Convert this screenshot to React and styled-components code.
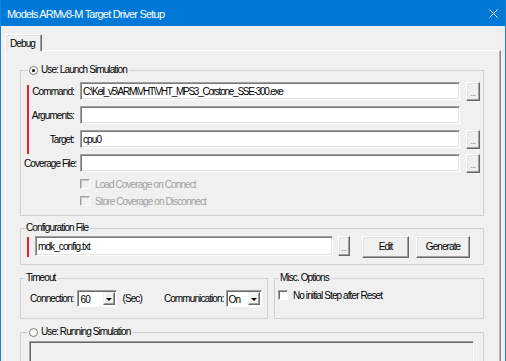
import React from 'react'
import styled, { createGlobalStyle } from 'styled-components'

const GlobalStyle = createGlobalStyle`
  html, body {
    margin: 0;
    padding: 0;
    background: #f0f0f0;
  }
  body {
    font-family: "Liberation Sans", Arial, sans-serif;
    font-size: 10px;
    letter-spacing: -0.9px;
    color: #000;
  }
  #root {
    width: 506px;
    height: 361px;
  }
`

const Window = styled.div`
  width: 506px;
  height: 361px;
  box-sizing: border-box;
  border-left: 1px solid #1883d7;
  border-right: 1px solid #1883d7;
  background: #f0f0f0;
  display: flex;
  flex-direction: column;
  overflow: hidden;
`

const TitleBar = styled.div`
  height: 26px;
  flex: none;
  background: #0078d7;
  color: #fff;
  display: flex;
  align-items: center;
  justify-content: space-between;
  padding: 1px 7px 0 6px;
  box-sizing: border-box;
  font-size: 11px;
  letter-spacing: -0.8px;
`

const Body = styled.div`
  flex: 1;
  display: flex;
  flex-direction: column;
  padding: 8px 4px 0 4px;
  min-height: 0;
`

const TabStrip = styled.div`
  display: flex;
  height: 16px;
  flex: none;
`

const Tab = styled.div`
  position: relative;
  z-index: 1;
  width: 37px;
  height: 17px;
  box-sizing: border-box;
  margin-bottom: -1px;
  padding: 3px 0 0 4px;
  background: #f0f0f0;
  border-top: 1px solid #fff;
  border-left: 1px solid #fff;
  border-right: 1px solid #696969;
  box-shadow: inset -1px 0 0 #a0a0a0, inset 1px 1px 0 #e3e3e3;
`

const Panel = styled.div`
  flex: 1;
  min-height: 0;
  overflow: hidden;
  border-top: 1px solid #fff;
  border-left: 1px solid #fff;
  border-right: 1px solid #8a8a8a;
  box-shadow: inset -1px 0 0 #b4b4b4;
  padding: 13px 16px 0 14px;
  display: flex;
  flex-direction: column;
`

const Group = styled.fieldset`
  margin: ${p => p.$mt || 0}px 0 0 0;
  min-width: 0;
  border: 1px solid #d0d0d0;
  padding: ${p => p.$pad};
  flex: ${p => (p.$grow ? 1 : 'none')};
  width: ${p => (p.$w ? `${p.$w}px` : 'auto')};
  box-sizing: border-box;
`

const Legend = styled.legend`
  padding: 0 2px 0 1px;
  margin-left: ${p => p.$ml || 0}px;
  line-height: 12px;
  height: 12px;
  display: flex;
  align-items: center;
  gap: 3px;
  color: #000;
`

const Radio = styled.span`
  width: 9px;
  height: 9px;
  box-sizing: border-box;
  border-radius: 50%;
  border: 1px solid #7a7a7a;
  background: #fff;
  display: flex;
  align-items: center;
  justify-content: center;
  &::after {
    content: '';
    width: 3px;
    height: 3px;
    border-radius: 50%;
    background: ${p => (p.$checked ? '#000' : 'transparent')};
  }
`

const FieldGrid = styled.div`
  display: grid;
  grid-template-columns: 3px 2px 51px 380px 20px;
  grid-template-rows: repeat(4, 18px);
  row-gap: 6px;
`

const RedBar = styled.div`
  width: 2px;
  background: #e0262c;
  grid-column: 2;
  grid-row: 1 / 4;
  margin: 3px 0 -6px 0;
`

const FieldLabel = styled.label`
  grid-column: ${p => (p.$wide ? '1 / 4' : '3')};
  grid-row: ${p => p.$row};
  align-self: center;
  text-align: right;
  padding-right: 6px;
  white-space: nowrap;
`

const TextBox = styled.div`
  box-sizing: border-box;
  height: ${p => p.$h || 18}px;
  width: ${p => (p.$w ? `${p.$w}px` : 'auto')};
  grid-column: 4;
  grid-row: ${p => p.$row || 'auto'};
  flex: none;
  background: #fff;
  border-style: solid;
  border-width: 1px;
  border-color: #a0a0a0 #fff #fff #a0a0a0;
  box-shadow: inset 1px 1px 0 #7a7a7a, inset -1px -1px 0 #e3e3e3;
  padding: 1px 2px 0 2px;
  display: flex;
  align-items: center;
  white-space: nowrap;
  overflow: hidden;
  letter-spacing: ${p => (p.$tight ? '-1.25px' : 'inherit')};
`

const Button = styled.div`
  box-sizing: border-box;
  width: ${p => p.$w}px;
  height: ${p => p.$h}px;
  margin-left: ${p => p.$ml || 0}px;
  grid-column: 5;
  grid-row: ${p => p.$row || 'auto'};
  justify-self: end;
  flex: none;
  background: #f0f0f0;
  border-style: solid;
  border-width: 1px;
  border-color: #fff #696969 #696969 #fff;
  box-shadow: inset -1px -1px 0 #a0a0a0, inset 1px 1px 0 #e3e3e3;
  display: flex;
  align-items: center;
  justify-content: center;
  color: ${p => (p.$dots ? '#555' : '#000')};
  font-size: ${p => (p.$dots ? '8px' : '10px')};
  letter-spacing: ${p => (p.$dots ? '-0.5px' : 'inherit')};
  line-height: 1;
  padding-top: ${p => (p.$dots ? '5px' : '0')};
`

const CheckList = styled.div`
  display: flex;
  flex-direction: column;
  gap: 5px;
  margin-top: 6px;
  padding-left: 56px;
`

const CheckRow = styled.div`
  display: flex;
  align-items: center;
  gap: 5px;
  height: 12px;
  white-space: nowrap;
  color: ${p => (p.$disabled ? '#a0a0a0' : '#000')};
`

const CheckBox = styled.span`
  width: 10px;
  height: 10px;
  box-sizing: border-box;
  flex: none;
  border-style: solid;
  border-width: 1px;
  border-color: #a0a0a0 #fff #fff #a0a0a0;
  box-shadow: inset 1px 1px 0 ${p => (p.$disabled ? '#c8c8c8' : '#696969')};
  background: ${p => (p.$disabled ? '#f0f0f0' : '#fff')};
`

const ConfigRow = styled.div`
  display: flex;
  align-items: flex-start;
  height: 22px;
`

const ConfigBar = styled.div`
  width: 2px;
  height: 20px;
  margin: 1px 6px 0 0;
  background: #e0262c;
  flex: none;
`

const SplitRow = styled.div`
  display: flex;
  gap: 6px;
  margin-top: 7px;
  flex: none;
`

const TimeoutRow = styled.div`
  display: flex;
  align-items: center;
  height: 17px;
  white-space: nowrap;
`

const Spaced = styled.span`
  margin-left: ${p => p.$ml}px;
`

const Select = styled.div`
  box-sizing: border-box;
  width: ${p => p.$w}px;
  height: 17px;
  flex: none;
  margin: 0 ${p => p.$mr || 0}px 0 ${p => p.$ml || 0}px;
  background: #fff;
  border-style: solid;
  border-width: 1px;
  border-color: #a0a0a0 #fff #fff #a0a0a0;
  box-shadow: inset 1px 1px 0 #696969;
  display: flex;
  align-items: stretch;
  padding: 1px 1px 1px 2px;
`

const SelectValue = styled.span`
  flex: 1;
  display: flex;
  align-items: center;
  padding-top: 1px;
`

const DropButton = styled.span`
  width: 12px;
  box-sizing: border-box;
  background: #f0f0f0;
  border-style: solid;
  border-width: 1px;
  border-color: #f0f0f0 #696969 #696969 #f0f0f0;
  box-shadow: inset -1px -1px 0 #a0a0a0, inset 1px 1px 0 #fff;
  display: flex;
  align-items: center;
  justify-content: center;
  &::after {
    content: '';
    border-left: 3px solid transparent;
    border-right: 3px solid transparent;
    border-top: 3px solid #000;
    margin-top: 1px;
  }
`

const InsetBox = styled.div`
  box-sizing: border-box;
  width: 445px;
  height: 40px;
  border-style: solid;
  border-width: 1px;
  border-color: #a0a0a0 #fff #fff #a0a0a0;
  box-shadow: inset 1px 1px 0 #696969;
`

const CloseIcon = () => (
  <svg width="9" height="9" viewBox="0 0 9 9">
    <path d="M0.5 0.5 L8.5 8.5 M8.5 0.5 L0.5 8.5" stroke="#fff" strokeWidth="1" />
  </svg>
)

export default function App() {
  return (
    <>
      <GlobalStyle />
      <Window>
        <TitleBar>
          <span>Models ARMv8-M Target Driver Setup</span>
          <CloseIcon />
        </TitleBar>
        <Body>
          <TabStrip>
            <Tab>Debug</Tab>
          </TabStrip>
          <Panel>
            <Group $pad="6px 3px 8px 3px">
              <Legend $ml={4}>
                <Radio $checked />
                Use: Launch Simulation
              </Legend>
              <FieldGrid>
                <RedBar />
                <FieldLabel $row={1}>Command:</FieldLabel>
                <TextBox $row={1} $tight>C:\Keil_v5\ARM\VHT\VHT_MPS3_Corstone_SSE-300.exe</TextBox>
                <Button $row={1} $w={14} $h={19} $dots>...</Button>
                <FieldLabel $row={2}>Arguments:</FieldLabel>
                <TextBox $row={2} />
                <FieldLabel $row={3}>Target:</FieldLabel>
                <TextBox $row={3}>cpu0</TextBox>
                <Button $row={3} $w={14} $h={19} $dots>...</Button>
                <FieldLabel $row={4} $wide>Coverage File:</FieldLabel>
                <TextBox $row={4} />
                <Button $row={4} $w={14} $h={19} $dots>...</Button>
              </FieldGrid>
              <CheckList>
                <CheckRow $disabled>
                  <CheckBox $disabled />
                  Load Coverage on Connect
                </CheckRow>
                <CheckRow $disabled>
                  <CheckBox $disabled />
                  Store Coverage on Disconnect
                </CheckRow>
              </CheckList>
            </Group>

            <Group $mt={6} $pad="2px 3px 6px 6px">
              <Legend $ml={-2}>Configuration File</Legend>
              <ConfigRow>
                <ConfigBar />
                <TextBox $w={298} $h={20}>mdk_config.txt</TextBox>
                <Button $w={12} $h={20} $ml={5} $dots>...</Button>
                <Button $w={47} $h={22} $ml={12}>Edit</Button>
                <Button $w={54} $h={22} $ml={7}>Generate</Button>
              </ConfigRow>
            </Group>

            <SplitRow>
              <Group $w={248} $pad="6px 3px 11px 9px">
                <Legend $ml={-5}>Timeout</Legend>
                <TimeoutRow>
                  Connection:
                  <Select $w={40} $ml={4} $mr={5}>
                    <SelectValue>60</SelectValue>
                    <DropButton />
                  </Select>
                  (Sec)
                  <Spaced $ml={22}>Communication:</Spaced>
                  <Select $w={36} $ml={2}>
                    <SelectValue>On</SelectValue>
                    <DropButton />
                  </Select>
                </TimeoutRow>
              </Group>
              <Group $grow $pad="5px 3px 11px 3px">
                <Legend $ml={1}>Misc. Options</Legend>
                <CheckRow>
                  <CheckBox />
                  No initial Step after Reset
                </CheckRow>
              </Group>
            </SplitRow>

            <Group $mt={7} $pad="3px 3px 0 8px">
              <Legend $ml={-1}>
                <Radio />
                Use: Running Simulation
              </Legend>
              <InsetBox />
            </Group>
          </Panel>
        </Body>
      </Window>
    </>
  )
}
